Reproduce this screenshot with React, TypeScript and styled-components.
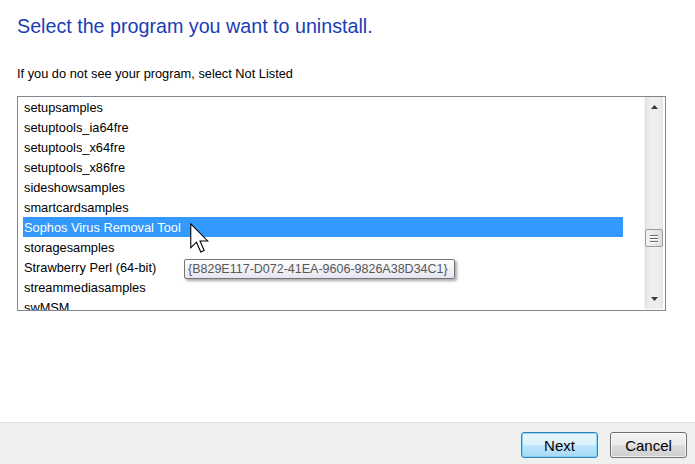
import styled, { createGlobalStyle } from "styled-components";

const Global = createGlobalStyle`
  html, body {
    margin: 0;
    padding: 0;
    background: #ffffff;
  }
  body {
    font-family: "Liberation Sans", Arial, sans-serif;
  }
`;

const Window = styled.div`
  width: 695px;
  height: 464px;
  display: flex;
  flex-direction: column;
  background: #ffffff;
  overflow: hidden;
`;

const Content = styled.div`
  flex: 1;
  padding: 14px 0 0 17px;
  display: flex;
  flex-direction: column;
`;

const Heading = styled.h1`
  margin: 0;
  font-size: 19.7px;
  font-weight: normal;
  line-height: 24px;
  color: #1a3db5;
`;

const Hint = styled.p`
  margin: 28px 0 0;
  font-size: 12.8px;
  line-height: 16px;
  color: #000000;
`;

const ListBox = styled.div`
  position: relative;
  margin-top: 14px;
  width: 647px;
  height: 213px;
  border: 1px solid #828790;
  display: flex;
`;

const Items = styled.ul`
  flex: 1;
  margin: 0;
  padding: 0 0 0 5px;
  list-style: none;
  overflow: hidden;
`;

const Item = styled.li<{ $selected?: boolean }>`
  width: 600px;
  height: 20px;
  padding-left: 1px;
  box-sizing: border-box;
  line-height: 21px;
  font-size: 12.8px;
  white-space: nowrap;
  color: ${(p) => (p.$selected ? "#ffffff" : "#000000")};
  background: ${(p) => (p.$selected ? "#3399ff" : "transparent")};
`;

const ScrollBar = styled.div`
  width: 18px;
  margin: 0 2px 1px 0;
  display: flex;
  flex-direction: column;
  align-items: center;
  background: linear-gradient(to right, #e3e3e3, #eeeeee 30%, #eeeeee 70%, #e6e6e6);
  border-left: 1px solid #f4f4f4;
`;

const ArrowBtn = styled.div`
  height: 20px;
  width: 100%;
  display: flex;
  align-items: center;
  justify-content: center;
`;

const Track = styled.div`
  flex: 1;
  width: 100%;
  padding-top: 112px;
  box-sizing: border-box;
`;

const Thumb = styled.div`
  height: 18px;
  border: 1px solid #9b9b9b;
  border-radius: 2px;
  box-sizing: border-box;
  background: linear-gradient(to right, #f3f3f3, #e8e8e8 50%, #dcdcdc);
  display: flex;
  flex-direction: column;
  align-items: center;
  justify-content: center;
  gap: 2px;
`;

const Grip = styled.span`
  display: block;
  width: 8px;
  height: 1px;
  background: #6a6a6a;
  box-shadow: 0 1px 0 #ffffff;
`;

const Tooltip = styled.div`
  position: absolute;
  left: 166px;
  top: 162px;
  height: 20px;
  padding: 0 6px 0 3px;
  box-sizing: border-box;
  border: 1px solid #767676;
  border-radius: 2px;
  background: linear-gradient(to bottom, #ffffff, #e4e5f0);
  box-shadow: 2px 2px 3px rgba(0, 0, 0, 0.35);
  color: #575757;
  font-size: 12.5px;
  line-height: 18px;
  white-space: nowrap;
`;

const Cursor = styled.svg`
  position: absolute;
  left: 172px;
  top: 126px;
`;

const Footer = styled.div`
  height: 32px;
  border-top: 1px solid #dfdfdf;
  background: #f0f0f0;
  display: flex;
  justify-content: flex-end;
  align-items: flex-start;
  gap: 12px;
  padding: 9px 8px 0 0;
`;

const Button = styled.button<{ $default?: boolean }>`
  width: 77px;
  height: 26px;
  padding: 0;
  border-radius: 3px;
  font-family: "Liberation Sans", Arial, sans-serif;
  font-size: 15px;
  color: #000000;
  border: 1px solid ${(p) => (p.$default ? "#3c7fb1" : "#707070")};
  box-shadow: inset 0 0 0 1px
    ${(p) => (p.$default ? "rgba(110, 210, 250, 0.8)" : "rgba(255, 255, 255, 0.7)")};
  background: ${(p) =>
    p.$default
      ? "linear-gradient(to bottom, #eaf6fd 0%, #d9f0fc 50%, #bee6fd 51%, #a7d9f5 100%)"
      : "linear-gradient(to bottom, #f2f2f2 0%, #ebebeb 50%, #dddddd 51%, #cfcfcf 100%)"};
`;

const programs = [
  "setupsamples",
  "setuptools_ia64fre",
  "setuptools_x64fre",
  "setuptools_x86fre",
  "sideshowsamples",
  "smartcardsamples",
  "Sophos Virus Removal Tool",
  "storagesamples",
  "Strawberry Perl (64-bit)",
  "streammediasamples",
  "swMSM",
];

export default function App() {
  return (
    <Window>
      <Global />
      <Content>
        <Heading>Select the program you want to uninstall.</Heading>
        <Hint>If you do not see your program, select Not Listed</Hint>
        <ListBox>
          <Items>
            {programs.map((name) => (
              <Item key={name} $selected={name === "Sophos Virus Removal Tool"}>
                {name}
              </Item>
            ))}
          </Items>
          <ScrollBar>
            <ArrowBtn>
              <svg width="7" height="4" viewBox="0 0 7 4">
                <path d="M3.5 0 L7 4 L0 4 Z" fill="#3a3a3a" />
              </svg>
            </ArrowBtn>
            <Track>
              <Thumb>
                <Grip />
                <Grip />
                <Grip />
              </Thumb>
            </Track>
            <ArrowBtn>
              <svg width="7" height="4" viewBox="0 0 7 4">
                <path d="M0 0 L7 0 L3.5 4 Z" fill="#3a3a3a" />
              </svg>
            </ArrowBtn>
          </ScrollBar>
          <Cursor width="20" height="31" viewBox="0 0 13 20">
            <path
              d="M0.5 0.5 L0.5 16 L4.2 12.4 L7 18.8 L9.2 17.8 L6.5 11.6 L11.5 11.6 Z"
              fill="#ffffff"
              stroke="#000000"
              strokeWidth="0.7"
              strokeLinejoin="miter"
            />
          </Cursor>
          <Tooltip>{"{B829E117-D072-41EA-9606-9826A38D34C1}"}</Tooltip>
        </ListBox>
      </Content>
      <Footer>
        <Button $default>Next</Button>
        <Button>Cancel</Button>
      </Footer>
    </Window>
  );
}
